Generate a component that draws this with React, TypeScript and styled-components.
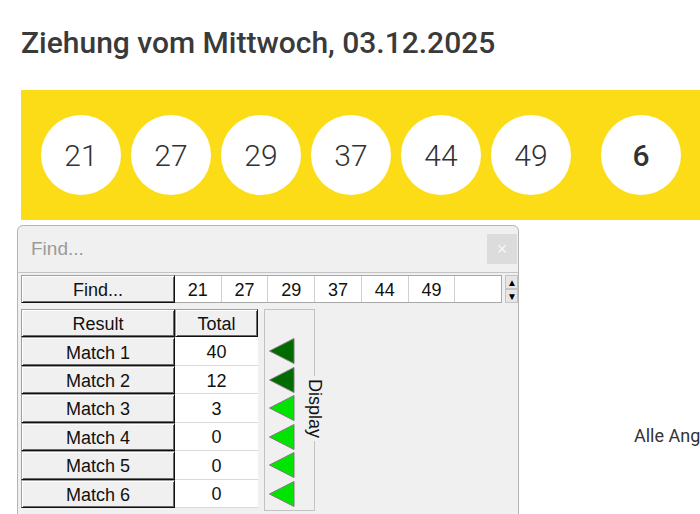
import React from 'react';
import styled, {createGlobalStyle} from "styled-components";

const GlobalStyle = createGlobalStyle`
  html, body {
    margin: 0;
    padding: 0;
    background: #fff;
    overflow: hidden;
  }
`;

const drawn = [21, 27, 29, 37, 44, 49];
const superNumber = 6;
const results = [
    {label: "Match 1", total: 40, hit: true},
    {label: "Match 2", total: 12, hit: true},
    {label: "Match 3", total: 3, hit: false},
    {label: "Match 4", total: 0, hit: false},
    {label: "Match 5", total: 0, hit: false},
    {label: "Match 6", total: 0, hit: false},
];

const Arrow = ({dark}: { dark: boolean }) => (
    <svg width="26" height="26" viewBox="0 0 26 26">
        <polygon points="25,0.5 25,25.5 0.5,13" fill={dark ? "#006b00" : "#00e400"} stroke="#7a7a7a" strokeWidth="1"/>
    </svg>
);

const App: React.FC = () => {
    return (
        <Page>
            <GlobalStyle/>
            <Heading>Ziehung vom Mittwoch, 03.12.2025</Heading>
            <Band>
                {drawn.map(n => <Ball key={n}>{n}</Ball>)}
                <Ball $super>{superNumber}</Ball>
            </Band>
            <Lower>
                <Window>
                    <TitleBar>
                        <span>Find...</span>
                        <Close>×</Close>
                    </TitleBar>
                    <WindowBody>
                        <FindRow>
                            <ClassicButton $width={154}>Find...</ClassicButton>
                            <Cells>
                                {drawn.map(n => <Cell key={n}>{n}</Cell>)}
                                <Cell/>
                            </Cells>
                            <Spin>
                                <SpinHalf>▲</SpinHalf>
                                <SpinHalf>▼</SpinHalf>
                            </Spin>
                        </FindRow>
                        <TableArea>
                            <ResultGrid>
                                <ClassicButton>Result</ClassicButton>
                                <ClassicButton>Total</ClassicButton>
                                {results.map(r => (
                                    <React.Fragment key={r.label}>
                                        <ClassicButton>{r.label}</ClassicButton>
                                        <TotalCell>{r.total}</TotalCell>
                                    </React.Fragment>
                                ))}
                            </ResultGrid>
                            <Group>
                                <Arrows>
                                    {results.map(r => <Arrow key={r.label} dark={r.hit}/>)}
                                </Arrows>
                                <Legend>Display</Legend>
                            </Group>
                        </TableArea>
                    </WindowBody>
                </Window>
                <Note>Alle Angaben ohne Gewähr</Note>
            </Lower>
        </Page>
    );
};

export default App;

const Page = styled.div`
  width: 700px;
  height: 514px;
  overflow: hidden;
  font-family: Roboto, "Liberation Sans", sans-serif;
`;

const Heading = styled.h2`
  margin: 0;
  box-sizing: border-box;
  height: 90px;
  padding: 25px 0 0 21px;
  font-family: Roboto, sans-serif;
  font-weight: 500;
  font-size: 30px;
  line-height: 1.2;
  color: #3a3a3a;
  white-space: nowrap;
`;

const Band = styled.div`
  margin-left: 21px;
  width: 720px;
  height: 130px;
  box-sizing: border-box;
  background: #fcdc17;
  display: flex;
  align-items: center;
  gap: 10px;
  padding-left: 20px;
`;

const Ball = styled.div<{ $super?: boolean }>`
  width: 80px;
  height: 80px;
  flex-shrink: 0;
  border-radius: 50%;
  background: #fff;
  display: flex;
  align-items: center;
  justify-content: center;
  font-family: Roboto, sans-serif;
  font-size: 30px;
  font-weight: ${({$super}) => $super ? 500 : 300};
  color: #333;
  margin-left: ${({$super}) => $super ? "20px" : "0"};
`;

const Lower = styled.div`
  display: flex;
  margin-top: 5px;
`;

const Window = styled.div`
  margin-left: 17px;
  width: 502px;
  height: 320px;
  flex-shrink: 0;
  box-sizing: border-box;
  border: 1px solid #b4b4b4;
  border-radius: 6px 6px 0 0;
  background: #f0f0f0;
  font-family: "Liberation Sans", Arial, sans-serif;
  color: #000;
`;

const TitleBar = styled.div`
  height: 46px;
  display: flex;
  align-items: center;
  justify-content: space-between;
  padding: 0 1px 0 13px;
  border-bottom: 1px solid #c4c4c4;
  font-size: 19px;
  color: #9a9a9a;
`;

const Close = styled.div`
  width: 30px;
  height: 30px;
  background: #dcdcdc;
  color: #f6f6f6;
  display: flex;
  align-items: center;
  justify-content: center;
  font-size: 18px;
`;

const WindowBody = styled.div`
  padding: 2px 0 0 3px;
`;

const FindRow = styled.div`
  display: flex;
  height: 28px;
`;

const ClassicButton = styled.div<{ $width?: number }>`
  ${({$width}) => $width ? `width: ${$width}px;` : ""}
  box-sizing: border-box;
  background: #f0f0f0;
  border: 1px solid;
  border-color: #a0a0a0 #101010 #101010 #a0a0a0;
  box-shadow: inset 1px 1px 0 #fff, inset -1px -1px 0 #6a6a6a;
  display: flex;
  align-items: center;
  justify-content: center;
  padding-top: 3px;
  font-size: 18px;
  color: #111;
`;

const Cells = styled.div`
  display: flex;
  width: 327px;
  box-sizing: border-box;
  border: 1px solid #a8a8a8;
  border-left: none;
  background: #fff;
`;

const Cell = styled.div`
  flex: 1;
  border-right: 1px solid #d0d0d0;
  display: flex;
  align-items: center;
  justify-content: center;
  padding-top: 3px;
  font-size: 18px;
  color: #111;
  &:last-child {
    border-right: none;
  }
`;

const Spin = styled.div`
  margin-left: 3px;
  width: 13px;
  display: flex;
  flex-direction: column;
`;

const SpinHalf = styled.div`
  flex: 1;
  background: #e6e6e6;
  border: 1px solid #c4c4c4;
  display: flex;
  align-items: center;
  justify-content: flex-end;
  font-size: 10px;
  color: #000;
  overflow: hidden;
`;

const TableArea = styled.div`
  display: flex;
  margin-top: 6px;
`;

const ResultGrid = styled.div`
  display: grid;
  grid-template-columns: 154px 83px;
  grid-template-rows: repeat(7, 1fr);
  height: 199px;
`;

const TotalCell = styled.div`
  background: #fff;
  border-bottom: 1px solid #dadada;
  display: flex;
  align-items: center;
  justify-content: center;
  padding-top: 3px;
  font-size: 18px;
  color: #111;
`;

const Group = styled.div`
  position: relative;
  margin-left: 6px;
  width: 51px;
  height: 202px;
  box-sizing: border-box;
  border: 1px solid #c2c2c2;
  padding: 28px 0 0 4px;
`;

const Arrows = styled.div`
  display: flex;
  flex-direction: column;
  gap: 2.5px;
`;

const Legend = styled.span`
  position: absolute;
  right: -11px;
  top: 66px;
  writing-mode: vertical-rl;
  background: #f0f0f0;
  padding: 3px 0;
  font-size: 18px;
  color: #111;
`;

const Note = styled.div`
  margin: 200px 0 0 115px;
  white-space: nowrap;
  font-family: Roboto, sans-serif;
  font-size: 18px;
  color: #333;
`;
